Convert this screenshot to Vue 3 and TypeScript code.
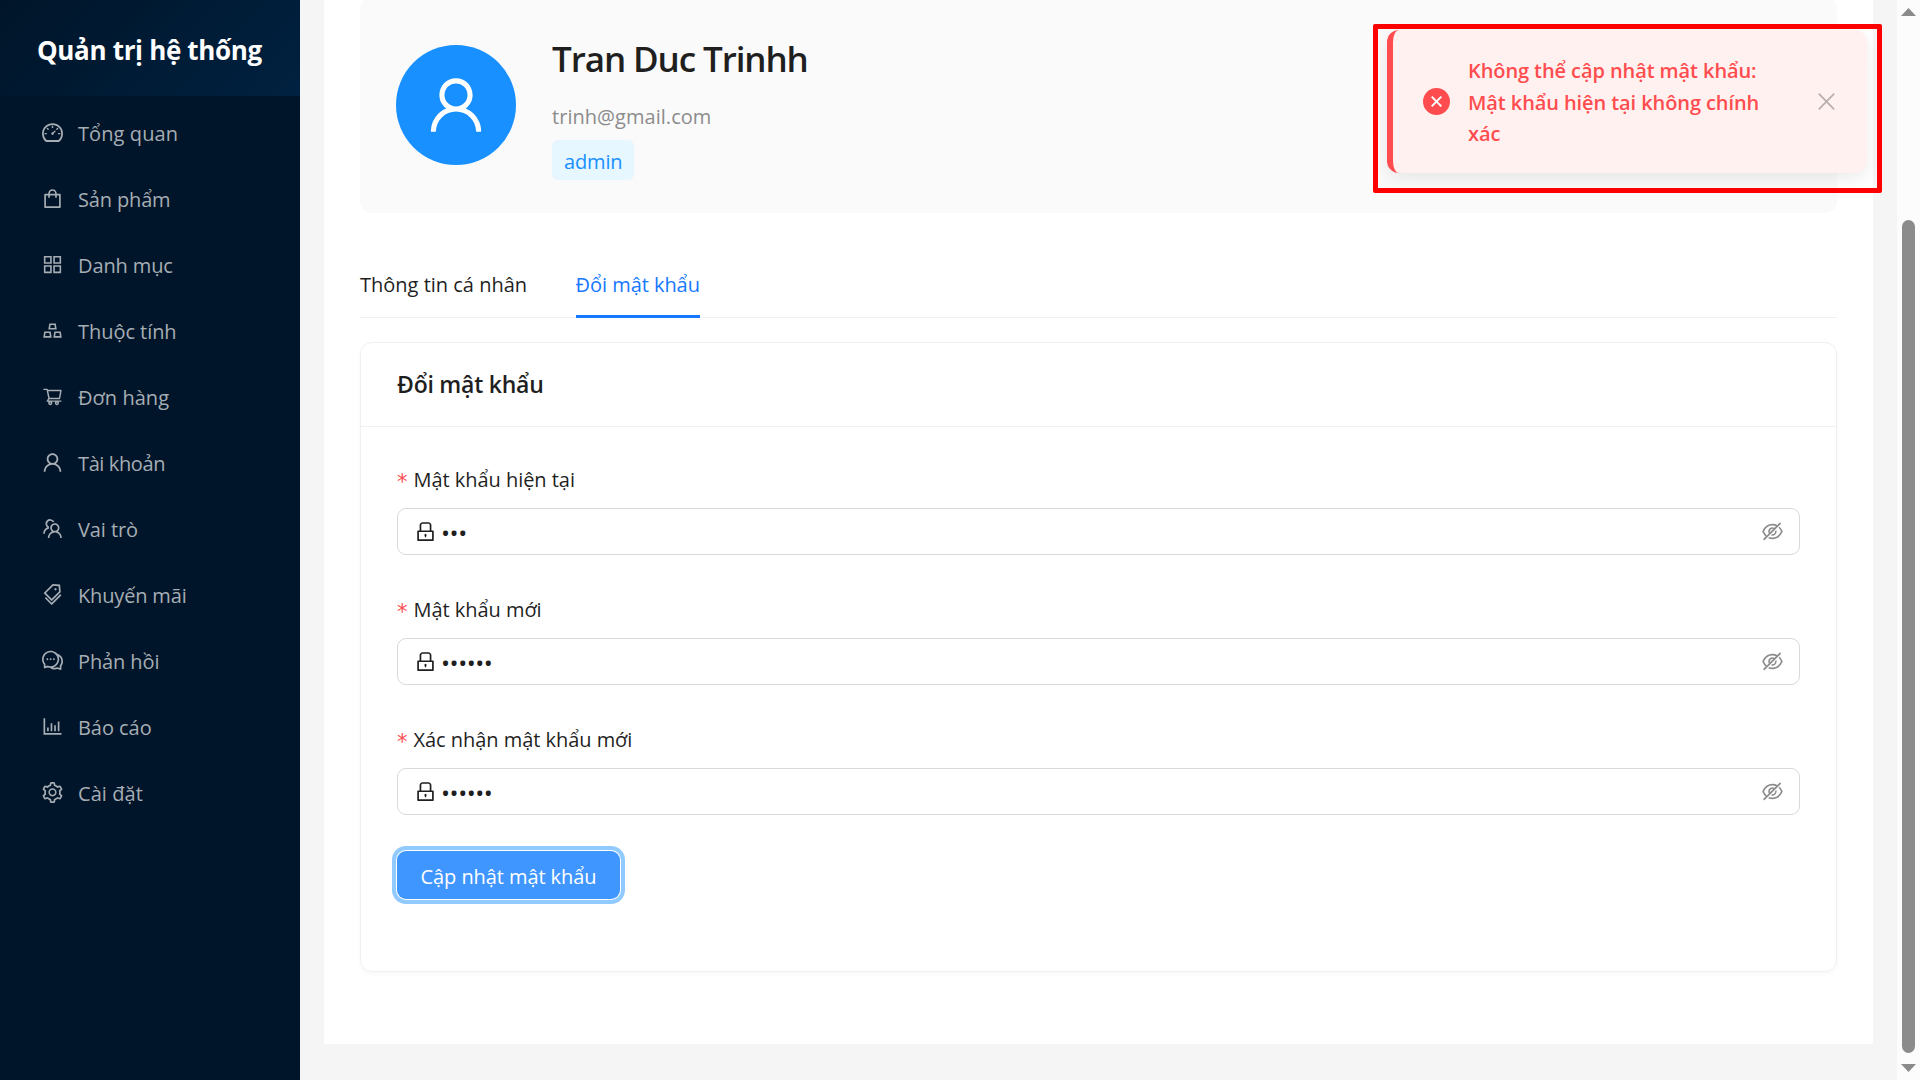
<script setup lang="ts">
import { reactive } from 'vue'

interface MenuItem {
  label: string
  icon: string
  box?: string
  spacing?: number
}

interface Field {
  id: string
  label: string
  value: string
}

const USER =
  'M858.5 763.6a374 374 0 00-80.6-119.5 375.63 375.63 0 00-119.5-80.6c-.4-.2-.8-.3-1.2-.5C719.5 518 760 444.7 760 362c0-137-111-248-248-248S264 225 264 362c0 82.7 40.5 156 102.8 201.1-.4.2-.8.3-1.2.5-44.8 18.9-85 46-119.5 80.6a375.63 375.63 0 00-80.6 119.5A371.7 371.7 0 00136 901.8a8 8 0 008 8.2h60c4.4 0 7.9-3.5 8-7.8 2-77.2 33-149.5 87.8-204.3 56.7-56.7 132-87.9 212.2-87.9s155.5 31.2 212.2 87.9C779 752.7 810 825 812 902.2c.1 4.4 3.6 7.8 8 7.8h60a8 8 0 008-8.2c-1-47.8-10.9-94.3-29.5-138.2zM512 534c-45.9 0-89.1-17.9-121.6-50.4S340 407.9 340 362c0-45.9 17.9-89.1 50.4-121.6S466.1 190 512 190s89.1 17.9 121.6 50.4S684 316.1 684 362c0 45.9-17.9 89.1-50.4 121.6S557.9 534 512 534z'
const DASHBOARD =
  'M924.8 385.6a446.7 446.7 0 00-96-142.4 446.7 446.7 0 00-142.4-96C631.1 123.8 572.5 112 512 112s-119.1 11.8-174.4 35.2a446.7 446.7 0 00-142.4 96 446.7 446.7 0 00-96 142.4C75.8 440.9 64 499.5 64 560c0 132.7 58.3 257.7 159.9 343.1l1.7 1.4c5.8 4.8 13.1 7.5 20.6 7.5h531.7c7.5 0 14.8-2.7 20.6-7.5l1.7-1.4C901.7 817.7 960 692.7 960 560c0-60.5-11.9-119.1-35.2-174.4zM761.4 836H262.6A371.12 371.12 0 01140 560c0-99.4 38.7-192.8 109-263 70.3-70.3 163.7-109 263-109 99.4 0 192.8 38.7 263 109 70.3 70.3 109 163.7 109 263 0 105.6-44.5 205.5-122.6 276zM623.5 421.5a8.03 8.03 0 00-11.3 0L527.7 506c-18.7-5-39.4-.2-54.1 14.5a55.95 55.95 0 000 79.2 55.95 55.95 0 0079.2 0 55.87 55.87 0 0014.5-54.1l84.5-84.5c3.1-3.1 3.1-8.2 0-11.3l-28.3-28.3zM490 320h44c4.4 0 8-3.6 8-8v-80c0-4.4-3.6-8-8-8h-44c-4.4 0-8 3.6-8 8v80c0 4.4 3.6 8 8 8zm260 218v44c0 4.4 3.6 8 8 8h80c4.4 0 8-3.6 8-8v-44c0-4.4-3.6-8-8-8h-80c-4.4 0-8 3.6-8 8zm12.7-197.2l-31.1-31.1a8.03 8.03 0 00-11.3 0l-56.6 56.6a8.03 8.03 0 000 11.3l31.1 31.1c3.1 3.1 8.2 3.1 11.3 0l56.6-56.6c3.1-3.1 3.1-8.2 0-11.3zm-458.6-31.1a8.03 8.03 0 00-11.3 0l-31.1 31.1a8.03 8.03 0 000 11.3l56.6 56.6c3.1 3.1 8.2 3.1 11.3 0l31.1-31.1c3.1-3.1 3.1-8.2 0-11.3l-56.6-56.6zM262 530h-80c-4.4 0-8 3.6-8 8v44c0 4.4 3.6 8 8 8h80c4.4 0 8-3.6 8-8v-44c0-4.4-3.6-8-8-8z'
const SHOPPING =
  'M832 312H696v-16c0-101.6-82.4-184-184-184s-184 82.4-184 184v16H192c-17.7 0-32 14.3-32 32v536c0 17.7 14.3 32 32 32h640c17.7 0 32-14.3 32-32V344c0-17.7-14.3-32-32-32zm-432-16c0-61.9 50.1-112 112-112s112 50.1 112 112v16H400v-16zm392 544H232V384h96v88c0 4.4 3.6 8 8 8h56c4.4 0 8-3.6 8-8v-88h224v88c0 4.4 3.6 8 8 8h56c4.4 0 8-3.6 8-8v-88h96v456z'
const APPS =
  'M464 144H160c-8.8 0-16 7.2-16 16v304c0 8.8 7.2 16 16 16h304c8.8 0 16-7.2 16-16V160c0-8.8-7.2-16-16-16zm-52 268H212V212h200v200zm452-268H560c-8.8 0-16 7.2-16 16v304c0 8.8 7.2 16 16 16h304c8.8 0 16-7.2 16-16V160c0-8.8-7.2-16-16-16zm-52 268H612V212h200v200zM464 544H160c-8.8 0-16 7.2-16 16v304c0 8.8 7.2 16 16 16h304c8.8 0 16-7.2 16-16V560c0-8.8-7.2-16-16-16zm-52 268H212V612h200v200zm452-268H560c-8.8 0-16 7.2-16 16v304c0 8.8 7.2 16 16 16h304c8.8 0 16-7.2 16-16V560c0-8.8-7.2-16-16-16zm-52 268H612V612h200v200z'
const GOLD =
  'M342 472h342c.4 0 .9 0 1.3-.1 4.4-.7 7.3-4.8 6.6-9.2l-40.2-248c-.6-3.9-4-6.7-7.9-6.7H382.2c-3.9 0-7.3 2.8-7.9 6.7l-40.2 248c-.1.4-.1.9-.1 1.3 0 4.4 3.6 8 8 8zm91.2-196h159.5l20.7 128h-201l20.8-128zm2.5 282.7c-.6-3.9-4-6.7-7.9-6.7H166.2c-3.9 0-7.3 2.8-7.9 6.7l-40.2 248c-.1.4-.1.9-.1 1.3 0 4.4 3.6 8 8 8h342c.4 0 .9 0 1.3-.1 4.4-.7 7.3-4.8 6.6-9.2l-40.2-248zM196.5 748l20.7-128h159.5l20.7 128H196.5zm709.4 58.7l-40.2-248c-.6-3.9-4-6.7-7.9-6.7H596.2c-3.9 0-7.3 2.8-7.9 6.7l-40.2 248c-.1.4-.1.9-.1 1.3 0 4.4 3.6 8 8 8h342c.4 0 .9 0 1.3-.1 4.3-.7 7.3-4.8 6.6-9.2zM626.5 748l20.7-128h159.5l20.7 128H626.5z'
const CART =
  'M922.9 701.9H327.4l29.9-60.9 496.8-.9c16.8 0 31.2-12 34.2-28.6l68.8-385.1c1.8-10.1-.9-20.5-7.5-28.4a34.99 34.99 0 00-26.6-12.5l-632-2.1-5.4-25.4c-3.4-16.2-18-28-34.6-28H96.5a35.3 35.3 0 100 70.6h125.9L246 312.8l58.1 281.3-74.8 122.1a34.96 34.96 0 00-3 36.8c6 11.9 18.1 19.4 31.5 19.4h62.8a102.43 102.43 0 00-20.6 61.7c0 56.6 46 102.6 102.6 102.6s102.6-46 102.6-102.6c0-22.3-7.4-44-20.6-61.7h161.1a102.43 102.43 0 00-20.6 61.7c0 56.6 46 102.6 102.6 102.6s102.6-46 102.6-102.6c0-22.3-7.4-44-20.6-61.7H923c19.4 0 35.3-15.8 35.3-35.3a35.42 35.42 0 00-35.4-35.2zM305.7 253l575.8 1.9-56.4 315.8-452.3.8L305.7 253zm96.9 612.7c-17.4 0-31.6-14.2-31.6-31.6 0-17.4 14.2-31.6 31.6-31.6s31.6 14.2 31.6 31.6a31.6 31.6 0 01-31.6 31.6zm325.1 0c-17.4 0-31.6-14.2-31.6-31.6 0-17.4 14.2-31.6 31.6-31.6s31.6 14.2 31.6 31.6a31.6 31.6 0 01-31.6 31.6z'
const TEAM =
  'M824.2 699.9a301.55 301.55 0 00-86.4-60.4C783.1 602.8 812 546.8 812 484c0-110.8-92.4-201.7-203.2-200-109.1 1.7-197 90.6-197 200 0 62.8 29 118.8 74.2 155.5a300.95 300.95 0 00-86.4 60.4C345 754.6 314 826.8 312 903.8a8 8 0 008 8.2h56c4.3 0 7.9-3.4 8-7.7 1.9-58 25.4-112.3 66.7-153.5A226.62 226.62 0 01612 684c60.9 0 118.2 23.7 161.3 66.8C814.6 792 838 846.3 840 904.3c.1 4.3 3.7 7.7 8 7.7h56a8 8 0 008-8.2c-2-77-33-149.2-87.8-203.9zM612 612c-34.2 0-66.4-13.3-90.5-37.5a126.86 126.86 0 01-37.5-91.8c.3-32.8 13.4-64.5 36.3-88 24-24.6 56.1-38.3 90.4-38.7 33.9-.3 66.8 12.9 91 36.6 24.8 24.3 38.4 56.8 38.4 91.4 0 34.2-13.3 66.3-37.5 90.5A127.3 127.3 0 01612 612zM361.5 510.4c-.9-8.7-1.4-17.5-1.4-26.4 0-15.9 1.5-31.4 4.3-46.5.7-3.6-1.2-7.3-4.5-8.8-13.6-6.1-26.1-14.5-36.9-25.1a127.54 127.54 0 01-38.7-95.4c.9-32.1 13.8-62.6 36.3-85.6 24.7-25.3 57.9-39.1 93.2-38.7 31.9.3 62.7 12.6 86 34.4 7.9 7.4 14.7 15.6 20.4 24.4 2 3.1 5.9 4.4 9.3 3.2 17.6-6.1 36.2-10.4 55.3-12.4 5.6-.6 8.8-6.6 6.3-11.6-32.5-64.3-98.9-108.7-175.7-109.9-110.9-1.7-203.3 89.2-203.3 199.9 0 62.8 28.9 118.8 74.2 155.5-31.8 14.7-61.1 35-86.5 60.4-54.8 54.7-85.8 126.9-87.8 204a8 8 0 008 8.2h56.1c4.3 0 7.9-3.4 8-7.7 1.9-58 25.4-112.3 66.7-153.5 29.4-29.4 65.4-49.8 104.7-59.7 3.9-1 6.5-4.7 6-8.7z'
const TAGS =
  'M483.2 790.3L861.4 412c1.7-1.7 2.5-4 2.3-6.3l-25.5-301.4c-.7-7.8-6.8-13.9-14.6-14.6L522.2 64.3c-2.3-.2-4.7.6-6.3 2.3L137.7 444.8a8.03 8.03 0 000 11.3l334.2 334.2c3.1 3.2 8.2 3.2 11.3 0zm62.6-651.7l224.6 19 19 224.6L477.5 694 233.9 450.5l311.9-311.9zm60.16 186.23a48 48 0 1067.88-67.89 48 48 0 10-67.88 67.89zM889.7 539.8l-39.6-39.5a8.03 8.03 0 00-11.3 0l-362 361.3-237.6-237a8.03 8.03 0 00-11.3 0l-39.6 39.5a8.03 8.03 0 000 11.3l243.2 242.8 39.6 39.5c3.1 3.1 8.2 3.1 11.3 0l407.3-406.6c3.1-3.1 3.1-8.2 0-11.3z'
const COMMENT =
  'M573 421c-23.1 0-41 17.9-41 40s17.9 40 41 40c21.1 0 39-17.9 39-40s-17.9-40-39-40zm-280 0c-23.1 0-41 17.9-41 40s17.9 40 41 40c21.1 0 39-17.9 39-40s-17.9-40-39-40zM894 345a343.92 343.92 0 00-189-130v.1c-17.1-19-36.4-36.5-58-52.1-163.7-119-393.5-82.7-513 81-96.3 133-92.2 311.9 6 439l.8 132.6c0 3.2.5 6.4 1.5 9.4a31.95 31.95 0 0040.1 20.9L309 806c33.5 11.9 68.1 18.7 102.5 20.6l-.5.4c89.1 64.9 205.9 84.4 313 49l127.1 41.4c3.2 1 6.5 1.6 9.9 1.6 17.7 0 32-14.3 32-32V753c88.1-119.6 90.4-284.9 1-408zM323 735l-12-5-99 31-1-104-8-9c-84.6-103.2-90.2-251.9-11-361 96.4-132.2 281.2-161.4 413-66 132.2 96.1 161.5 280.6 66 412-80.1 109.9-223.5 150.5-348 102zm505-17l-8 10 1 104-98-33-12 5c-56 20.8-115.7 22.5-171 7l-.2-.1A367.31 367.31 0 00729 676c76.4-105.3 88.8-237.6 44.4-350.4l.6.4c23 16.5 44.1 37.1 62 62 72.6 99.6 68.5 235.2-8 330zM433 421c-23.1 0-41 17.9-41 40s17.9 40 41 40c21.1 0 39-17.9 39-40s-17.9-40-39-40z'
const CHART =
  'M888 792H200V168c0-4.4-3.6-8-8-8h-56c-4.4 0-8 3.6-8 8v688c0 4.4 3.6 8 8 8h752c4.4 0 8-3.6 8-8v-56c0-4.4-3.6-8-8-8zm-600-80h56c4.4 0 8-3.6 8-8V560c0-4.4-3.6-8-8-8h-56c-4.4 0-8 3.6-8 8v144c0 4.4 3.6 8 8 8zm152 0h56c4.4 0 8-3.6 8-8V384c0-4.4-3.6-8-8-8h-56c-4.4 0-8 3.6-8 8v320c0 4.4 3.6 8 8 8zm152 0h56c4.4 0 8-3.6 8-8V462c0-4.4-3.6-8-8-8h-56c-4.4 0-8 3.6-8 8v242c0 4.4 3.6 8 8 8zm152 0h56c4.4 0 8-3.6 8-8V304c0-4.4-3.6-8-8-8h-56c-4.4 0-8 3.6-8 8v400c0 4.4 3.6 8 8 8z'
const SETTING =
  'M924.8 625.7l-65.5-56c3.1-19 4.7-38.4 4.7-57.8s-1.6-38.8-4.7-57.8l65.5-56a32.03 32.03 0 009.3-35.2l-.9-2.6a443.74 443.74 0 00-79.7-137.9l-1.8-2.1a32.12 32.12 0 00-35.1-9.5l-81.3 28.9c-30-24.6-63.5-44-99.7-57.6l-15.7-85a32.05 32.05 0 00-25.8-25.7l-2.7-.5c-52.1-9.4-106.9-9.4-159 0l-2.7.5a32.05 32.05 0 00-25.8 25.7l-15.8 85.4a351.86 351.86 0 00-99 57.4l-81.9-29.1a32 32 0 00-35.1 9.5l-1.8 2.1a446.02 446.02 0 00-79.7 137.9l-.9 2.6c-4.5 12.5-.8 26.5 9.3 35.2l66.3 56.6c-3.1 18.8-4.6 38-4.6 57.1 0 19.2 1.5 38.4 4.6 57.1L99 625.5a32.03 32.03 0 00-9.3 35.2l.9 2.6c18.1 50.4 44.9 96.9 79.7 137.9l1.8 2.1a32.12 32.12 0 0035.1 9.5l81.9-29.1c29.8 24.5 63.1 43.9 99 57.4l15.8 85.4a32.05 32.05 0 0025.8 25.7l2.7.5a449.4 449.4 0 00159 0l2.7-.5a32.05 32.05 0 0025.8-25.7l15.7-85a350 350 0 0099.7-57.6l81.3 28.9a32 32 0 0035.1-9.5l1.8-2.1c34.8-41.1 61.6-87.5 79.7-137.9l.9-2.6c4.5-12.3.8-26.3-9.3-35zM788.3 465.9c2.5 15.1 3.8 30.6 3.8 46.1s-1.3 31-3.8 46.1l-6.6 40.1 74.7 63.9a370.03 370.03 0 01-42.6 73.6L721 702.8l-31.4 25.8c-23.9 19.6-50.5 35-79.3 45.8l-38.1 14.3-17.9 97a377.5 377.5 0 01-85 0l-17.9-97.2-37.8-14.5c-28.5-10.8-55-26.2-78.7-45.7l-31.4-25.9-93.4 33.2c-17-22.9-31.2-47.6-42.6-73.6l75.5-64.5-6.5-40c-2.4-14.9-3.7-30.3-3.7-45.5 0-15.3 1.2-30.6 3.7-45.5l6.5-40-75.5-64.5c11.3-26.1 25.6-50.7 42.6-73.6l93.4 33.2 31.4-25.9c23.7-19.5 50.2-34.9 78.7-45.7l37.9-14.3 17.9-97.2c28.1-3.2 56.8-3.2 85 0l17.9 97 38.1 14.3c28.7 10.8 55.4 26.2 79.3 45.8l31.4 25.8 92.8-32.9c17 22.9 31.2 47.6 42.6 73.6L781.8 426l6.5 39.9zM512 326c-97.2 0-176 78.8-176 176s78.8 176 176 176 176-78.8 176-176-78.8-176-176-176zm79.2 255.2A111.6 111.6 0 01512 614c-29.9 0-58-11.7-79.2-32.8A111.6 111.6 0 01400 502c0-29.9 11.7-58 32.8-79.2C454 401.6 482.1 390 512 390c29.9 0 58 11.6 79.2 32.8A111.6 111.6 0 01624 502c0 29.9-11.7 58-32.8 79.2z'
const LOCK =
  'M832 464h-68V240c0-70.7-57.3-128-128-128H388c-70.7 0-128 57.3-128 128v224h-68c-17.7 0-32 14.3-32 32v384c0 17.7 14.3 32 32 32h640c17.7 0 32-14.3 32-32V496c0-17.7-14.3-32-32-32zM332 240c0-30.9 25.1-56 56-56h248c30.9 0 56 25.1 56 56v224H332V240zm460 600H232V536h560v304zM484 701v53c0 4.4 3.6 8 8 8h40c4.4 0 8-3.6 8-8v-53a48.01 48.01 0 10-56 0z'
const EYE_OFF =
  'M942.2 486.2Q889.47 375.11 816.7 305l-50.88 50.88C807.31 395.53 843.45 447.4 874.7 512 791.5 684.2 673.4 766 512 766q-72.67 0-133.87-22.38L323 798.75Q408 838 512 838q288.3 0 430.2-300.3a60.29 60.29 0 000-51.5zm-63.57-320.64L836 122.88a8 8 0 00-11.32 0L715.31 232.2Q624.86 186 512 186q-288.3 0-430.2 300.3a60.3 60.3 0 000 51.5q56.69 119.4 136.5 191.41L112.48 835a8 8 0 000 11.31L155.17 889a8 8 0 0011.31 0l712.15-712.12a8 8 0 000-11.32zM149.3 512C232.6 339.8 350.7 258 512 258c54.54 0 104.13 9.36 149.12 28.39l-70.3 70.3a176 176 0 00-238.13 238.13l-83.42 83.42C223.1 637.49 183.3 582.28 149.3 512zm246.7 0a112.11 112.11 0 01146.2-106.69L401.31 546.2A112 112 0 01396 512zM508 624c-3.46 0-6.87-.16-10.25-.47l-52.82 52.82a176.09 176.09 0 00227.42-227.42l-52.82 52.82c.31 3.38.47 6.79.47 10.25a111.94 111.94 0 01-112 112z'

const BOX = '64 64 896 896'

const menu: MenuItem[] = [
  { label: 'Tổng quan', icon: DASHBOARD, spacing: 0.1 },
  { label: 'Sản phẩm', icon: SHOPPING, spacing: -0.15 },
  { label: 'Danh mục', icon: APPS, spacing: -0.12 },
  { label: 'Thuộc tính', icon: GOLD, spacing: -0.05 },
  { label: 'Đơn hàng', icon: CART, box: '0 0 1024 1024', spacing: 0.05 },
  { label: 'Tài khoản', icon: USER, spacing: -0.38 },
  { label: 'Vai trò', icon: TEAM, spacing: -0.1 },
  { label: 'Khuyến mãi', icon: TAGS, spacing: -0.16 },
  { label: 'Phản hồi', icon: COMMENT, spacing: -0.1 },
  { label: 'Báo cáo', icon: CHART, spacing: -0.05 },
  { label: 'Cài đặt', icon: SETTING, spacing: 0.05 },
]

const fields = reactive<Field[]>([
  { id: 'current', label: 'Mật khẩu hiện tại', value: '•••' },
  { id: 'next', label: 'Mật khẩu mới', value: '••••••' },
  { id: 'confirm', label: 'Xác nhận mật khẩu mới', value: '••••••' },
])
</script>

<template>
  <div class="layout">
    <aside class="sider">
      <div class="brand"><span>Quản trị hệ thống</span></div>
      <nav class="menu">
        <a v-for="item in menu" :key="item.label" class="menu-item">
          <svg class="icon" :viewBox="item.box ?? BOX"><path :d="item.icon" /></svg>
          <span class="menu-label" :style="{ letterSpacing: (item.spacing ?? 0) + 'px' }">{{ item.label }}</span>
        </a>
      </nav>
    </aside>

    <main class="content">
      <section class="page">
        <header class="profile">
          <div class="avatar">
            <svg :viewBox="BOX"><path :d="USER" /></svg>
          </div>
          <div class="info">
            <h2 class="name">Tran Duc Trinhh</h2>
            <div class="email">trinh@gmail.com</div>
            <span class="role">admin</span>
          </div>
        </header>

        <div class="tabs">
          <button class="tab">Thông tin cá nhân</button>
          <button class="tab active">Đổi mật khẩu</button>
        </div>

        <section class="card">
          <h3 class="card-title"><span>Đổi mật khẩu</span></h3>
          <form class="form">
            <div v-for="field in fields" :key="field.id" class="field">
              <label class="field-label"><i class="required">*</i>{{ field.label }}</label>
              <div class="input">
                <svg class="icon" :viewBox="BOX"><path :d="LOCK" /></svg>
                <span class="dots">{{ field.value }}</span>
                <svg class="icon eye" :viewBox="BOX"><path :d="EYE_OFF" /></svg>
              </div>
            </div>
            <button type="button" class="submit">Cập nhật mật khẩu</button>
          </form>
        </section>
      </section>
    </main>

    <div class="scrollbar">
      <svg class="arrow" viewBox="0 0 15 8"><path d="M7.5 0L15 8H0z" /></svg>
      <div class="track"><div class="thumb"></div></div>
      <svg class="arrow" viewBox="0 0 15 8"><path d="M0 0h15L7.5 8z" /></svg>
    </div>

    <div class="highlight">
      <div class="toast">
        <svg class="toast-icon" viewBox="0 0 27 27">
          <circle cx="13.5" cy="13.5" r="13.5" />
          <path d="M8.7 8.6l9.6 9.8M18.3 8.6l-9.6 9.8" />
        </svg>
        <p class="toast-text">Không thể cập nhật mật khẩu:<br />Mật khẩu hiện tại không chính<br />xác</p>
        <svg class="toast-close" viewBox="0 0 17 17"><path d="M.8.6l15.4 15.8M16.2.6L.8 16.4" /></svg>
      </div>
    </div>
  </div>
</template>

<style>
body {
  overflow: hidden;
}
</style>

<style scoped>
.layout {
  position: relative;
  display: flex;
  width: 1920px;
  height: 1080px;
  overflow: hidden;
  background: #f5f5f5;
  color: #1f1f1f;
  font-family: 'Open Sans', 'Noto Sans', sans-serif;
  font-size: 20px;
  line-height: 33px;
}

button {
  border: 0;
  padding: 0;
  margin: 0;
  background: none;
  font: inherit;
  color: inherit;
}

.icon {
  flex: none;
  width: 21px;
  height: 21px;
  fill: currentColor;
}

.sider {
  flex: none;
  width: 300px;
  background: #001529;
}

.brand {
  display: flex;
  align-items: center;
  height: 96px;
  box-sizing: border-box;
  padding: 4px 0 0 37px;
  background: linear-gradient(135deg, #001529 0%, #002140 100%);
  color: #fff;
  font-size: 26px;
  font-weight: 700;
  letter-spacing: -0.33px;
  white-space: nowrap;
}

.menu {
  display: flex;
  flex-direction: column;
  gap: 6px;
  padding-top: 6px;
}

.menu-item {
  display: flex;
  align-items: center;
  gap: 15px;
  height: 60px;
  padding-left: 42px;
  color: #a6adb4;
}

.menu-label {
  padding-top: 2px;
}

.content {
  flex: 1;
  min-width: 0;
  padding: 0 24px;
}

.page {
  display: flex;
  flex-direction: column;
  box-sizing: border-box;
  height: 1044px;
  padding: 0 36px;
  background: #fff;
}

.profile,
.tabs,
.card {
  flex: none;
}

.profile {
  display: flex;
  gap: 36px;
  box-sizing: border-box;
  height: 216px;
  margin-top: -3px;
  padding: 36px;
  border-radius: 12px;
  background: #fafafa;
}

.avatar {
  flex: none;
  display: flex;
  align-items: center;
  justify-content: center;
  width: 120px;
  height: 120px;
  margin-top: 12px;
  border-radius: 50%;
  background: #1890ff;
}

.avatar svg {
  width: 60px;
  height: 60px;
  fill: #fff;
}

.info {
  display: flex;
  flex-direction: column;
  align-items: flex-start;
}

.name {
  margin: 2px 0 0;
  font-size: 35px;
  font-weight: 600;
  line-height: 48px;
  letter-spacing: -1.1px;
}

.email {
  margin-top: 17px;
  color: #8c8c8c;
  letter-spacing: 0.04px;
}

.role {
  height: 40px;
  box-sizing: border-box;
  margin-top: 7px;
  padding: 2px 11.5px 0 12px;
  border-radius: 6px;
  background: #e6f7ff;
  color: #1890ff;
  line-height: 40px;
  letter-spacing: -0.15px;
}

.tabs {
  display: flex;
  gap: 48.5px;
  height: 69px;
  margin-top: 36px;
  box-shadow: inset 0 -1px #f0f0f0;
}

.tab {
  padding-top: 1px;
}

.tab.active {
  color: #1677ff;
  letter-spacing: -0.05px;
  box-shadow: inset 0 -3px #1677ff;
}

.card {
  display: flex;
  flex-direction: column;
  box-sizing: border-box;
  height: 630px;
  margin-top: 24px;
  border: 1px solid #f0f0f0;
  border-radius: 12px;
  box-shadow: 0 2px 4px rgba(0, 0, 0, 0.03);
}

.card-title {
  display: flex;
  align-items: center;
  box-sizing: border-box;
  height: 84px;
  margin: 0;
  padding: 0 36px;
  border-bottom: 1px solid #f0f0f0;
  font-size: 23px;
  font-weight: 600;
  letter-spacing: -0.23px;
}

.form {
  display: flex;
  flex-direction: column;
  align-items: stretch;
  padding: 36px;
}

.field {
  display: flex;
  flex-direction: column;
  gap: 12px;
  margin-bottom: 38px;
}

.field-label {
  display: flex;
  height: 33px;
  letter-spacing: -0.04px;
}

.required {
  width: 16.5px;
  color: #ff4d4f;
  font-family: 'DejaVu Sans', sans-serif;
  font-style: normal;
  font-size: 21px;
  line-height: 38px;
}

.input {
  display: flex;
  align-items: center;
  box-sizing: border-box;
  height: 47px;
  padding: 0 16px 0 17px;
  border: 1px solid #d9d9d9;
  border-radius: 9px;
}

.dots {
  flex: 1;
  padding: 1px 0 0 5px;
  font-size: 24px;
  letter-spacing: -0.46px;
}

.eye {
  color: #8c8c8c;
}

.submit {
  align-self: flex-start;
  width: 223px;
  height: 48px;
  margin-top: -2px;
  padding-top: 2px;
  border-radius: 9px;
  background: #4096ff;
  color: #fff;
  letter-spacing: -0.08px;
  box-shadow: 0 0 0 1px #fff, 0 0 0 5px #91caff;
  white-space: nowrap;
}

.scrollbar {
  flex: none;
  display: flex;
  flex-direction: column;
  align-items: center;
  justify-content: space-between;
  box-sizing: border-box;
  width: 23px;
  padding: 8px 0;
  background: #fcfcfc;
}

.arrow {
  width: 15px;
  height: 8px;
  fill: #8b8b8b;
}

.track {
  flex: 1;
  padding-top: 204px;
}

.thumb {
  width: 13px;
  height: 833px;
  border-radius: 7px;
  background: #8b8b8b;
}

.highlight {
  position: absolute;
  top: 24px;
  left: 1373px;
  box-sizing: border-box;
  width: 509px;
  height: 169px;
  padding: 1px 9px;
  border: 5px solid #f00;
  border-radius: 2px;
}

.toast {
  display: flex;
  align-items: center;
  box-sizing: border-box;
  width: 480px;
  height: 143px;
  padding: 0 32px 0 30px;
  border-left: 6px solid #ff4d4f;
  border-radius: 12px;
  background: #fff1f0;
  color: #ff4d4f;
  box-shadow: 0 6px 18px rgba(0, 0, 0, 0.08);
}

.toast-icon {
  flex: none;
  width: 27px;
  height: 27px;
  fill: #ff4d4f;
}

.toast-icon path {
  fill: none;
  stroke: #fff;
  stroke-width: 2;
}

.toast-text {
  flex: 1;
  margin: 0 0 0 18px;
  padding-top: 2px;
  font-weight: 600;
  line-height: 31.5px;
  letter-spacing: -0.09px;
}

.toast-close {
  flex: none;
  width: 17px;
  height: 17px;
  fill: none;
  stroke: #b7adac;
  stroke-width: 1.6;
}
</style>
